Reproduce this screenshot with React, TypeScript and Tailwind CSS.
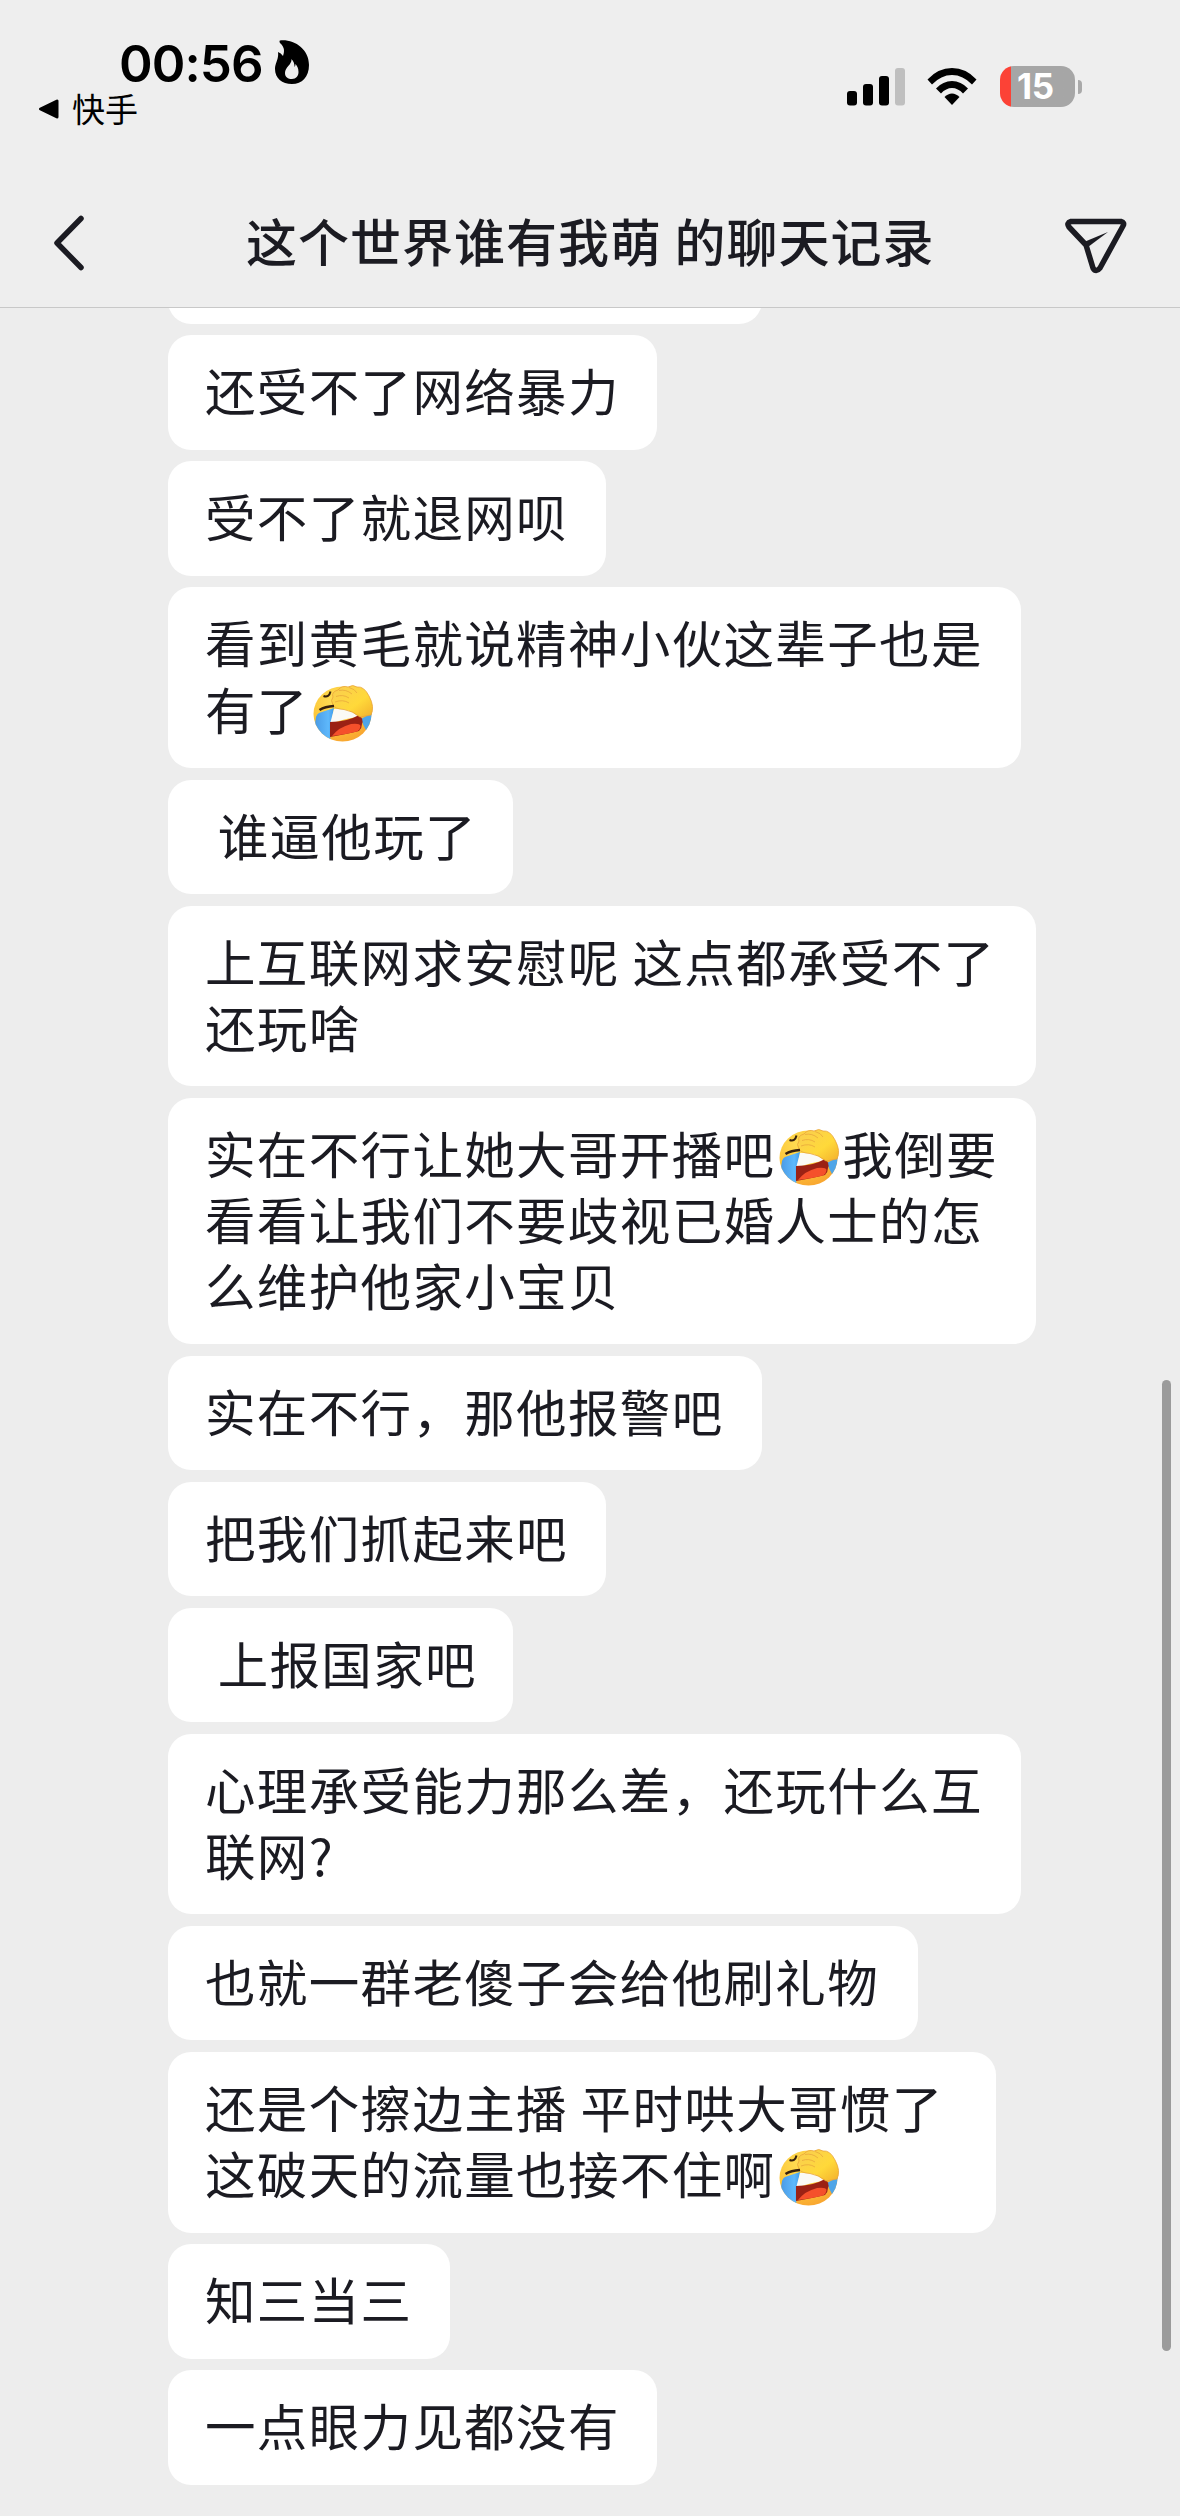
import React from "react";

interface Message {
  id: number;
  width: string;
  lines: string[];
}

// "[捂脸]" marks where the emoji goes inside a line
const EMOJI = "[捂脸]";

const messages: Message[] = [
  { id: 0, width: "w-[594px]", lines: [""] },
  { id: 1, width: "w-[489px]", lines: ["还受不了网络暴力"] },
  { id: 2, width: "w-[438px]", lines: ["受不了就退网呗"] },
  {
    id: 3,
    width: "w-[853px]",
    lines: ["看到黄毛就说精神小伙这辈子也是", "有了[捂脸]"],
  },
  { id: 4, width: "w-[345px]", lines: [" 谁逼他玩了"] },
  {
    id: 5,
    width: "w-[868px]",
    lines: ["上互联网求安慰呢 这点都承受不了", "还玩啥"],
  },
  {
    id: 6,
    width: "w-[868px]",
    lines: [
      "实在不行让她大哥开播吧[捂脸]我倒要",
      "看看让我们不要歧视已婚人士的怎",
      "么维护他家小宝贝",
    ],
  },
  { id: 7, width: "w-[594px]", lines: ["实在不行，那他报警吧"] },
  { id: 8, width: "w-[438px]", lines: ["把我们抓起来吧"] },
  { id: 9, width: "w-[345px]", lines: [" 上报国家吧"] },
  {
    id: 10,
    width: "w-[853px]",
    lines: ["心理承受能力那么差，还玩什么互", "联网?"],
  },
  { id: 11, width: "w-[750px]", lines: ["也就一群老傻子会给他刷礼物"] },
  {
    id: 12,
    width: "w-[828px]",
    lines: ["还是个擦边主播 平时哄大哥惯了", "这破天的流量也接不住啊[捂脸]"],
  },
  { id: 13, width: "w-[282px]", lines: ["知三当三"] },
  { id: 14, width: "w-[489px]", lines: ["一点眼力见都没有"] },
];

const FacepalmEmoji: React.FC = () => (
  <span className="inline-flex h-[60px] w-[67px] justify-center pl-px align-[-14px]">
    <svg viewBox="0 0 60 60" className="h-[60px] w-[60px] shrink-0">
      <defs>
        <radialGradient id="face" cx="0.35" cy="0.25" r="0.85">
          <stop offset="0" stopColor="#ffdf55" />
          <stop offset="0.55" stopColor="#fcc437" />
          <stop offset="1" stopColor="#f8a02f" />
        </radialGradient>
        <linearGradient id="hand" x1="0" y1="0" x2="1" y2="1">
          <stop offset="0" stopColor="#f9cd52" />
          <stop offset="0.6" stopColor="#ffd93a" />
          <stop offset="1" stopColor="#f3b02c" />
        </linearGradient>
        <linearGradient id="tear" x1="0" y1="0" x2="1" y2="0">
          <stop offset="0" stopColor="#4a9be6" />
          <stop offset="0.7" stopColor="#5eb8fb" />
          <stop offset="1" stopColor="#3f9bea" />
        </linearGradient>
        <clipPath id="round">
          <ellipse cx="29.5" cy="30" rx="29" ry="27.5" />
        </clipPath>
      </defs>
      <ellipse cx="29.5" cy="30" rx="29" ry="27.5" fill="url(#face)" />
      <g clipPath="url(#round)">
        <path d="M6 29 L21 24 L18 40 L17 60 L3 56 Q1 42 3 33 Q4 30 6 29Z" fill="url(#tear)" />
        <path d="M48 35 L61 28 L60 43 L54 48 Q50 41 48 35Z" fill="#4fa5e8" />
      </g>
      <path d="M21 25 L34 25 Q41 29 46 33 Q33 34 17 40 Z" fill="#fbfaf5" />
      <path d="M17 38 Q34 38 46 31 Q51 35 49 40 Q49 44 46 47 Q34 50 17 53 Z" fill="#9b2114" />
      <path d="M19 52 Q26 43 38 40 Q47 39 47.500 42 Q47 46 44 47.500 Q34 50 19 52Z" fill="#f5502b" />
      <path
        d="M20 13 Q18 8 25 6 Q29 1 35 3 Q40 0 44 3 Q51 2 56 12 Q62 23 58 31 L47 33 Q40 27 31 25.500 Q22 25 20 21 Q17 16 20 13Z"
        fill="url(#hand)"
        stroke="#eaa43a"
        strokeWidth="0.8"
      />
      <path
        d="M23 12.500 Q30 10 36 14 M22 18 Q30 15 36 19 M26 6.500 Q33 5 39 10 M36 3.500 Q42 5 44 9"
        fill="none"
        stroke="#e8a83c"
        strokeWidth="0.8"
      />
      <path d="M6.500 26 Q12 22.500 21 22" fill="none" stroke="#35200d" strokeWidth="2.600" />
      <path d="M10.500 12 Q16 14 17.500 7.500" fill="none" stroke="#35200d" strokeWidth="2" />
    </svg>
  </span>
);

const MessageBubble: React.FC<{ message: Message }> = ({ message }) => (
  <li
    className={`${message.width} shrink-0 rounded-[23px] bg-white pt-[21px] pb-[27px] pl-[37px] text-[50.5px] leading-[66.2px] tracking-[1.35px] whitespace-pre text-[#1b1b22]`}
  >
    {message.lines.map((line, i) => {
      const parts = line.split(EMOJI);
      return (
        <div key={i} className="h-[66.2px]">
          {parts.map((part, j) => (
            <React.Fragment key={j}>
              {j > 0 && <FacepalmEmoji />}
              {part}
            </React.Fragment>
          ))}
        </div>
      );
    })}
  </li>
);

const StatusBar: React.FC = () => (
  <div className="flex h-[176px] justify-between text-black">
    <div className="pt-[34px] pl-[38px]">
      <div className="flex h-[58px] items-center pl-[81px]">
        <span className="w-[156px] pt-[2px] font-[Inter] text-[51px] leading-[56px] font-semibold tracking-[-0.9px] whitespace-nowrap">
          00:56
        </span>
        <svg viewBox="0 0 34 44" className="-mt-[2px] h-[44px] w-[34px]">
          <path
            fillRule="evenodd"
            d="M5 0.5 C19 -1 34 9 34 25 C34 37 27 44 17 44 C7 44 0 38 0 29 C0 23 4 19 3 12 Q6 13 8 16 Q11 8 5 3 Q4 1 5 0.5Z M16.5 19 C17 25 10 27 10 33 C10 37 13 39 17 39 C21 39 23.500 36 23.500 32 C23.500 28 22 26 20.500 24 Q20.500 26 19.500 27 Q19.500 22 16.500 19Z"
            fill="currentColor"
          />
        </svg>
      </div>
      <div className="flex h-[34px] items-center gap-[12px]">
        <svg viewBox="0 0 22 22" className="h-[22px] w-[22px]">
          <path
            d="M2.500 11 L19 3 L19 19 Z"
            fill="currentColor"
            stroke="currentColor"
            strokeWidth="3"
            strokeLinejoin="round"
          />
        </svg>
        <span className="-mt-[3px] text-[33px] leading-[34px]">快手</span>
      </div>
    </div>

    <div className="mt-[66px] flex h-[41px] items-center pr-[98px]">
      <svg viewBox="0 0 58 38" className="h-[38px] w-[58px]">
        <rect x="0" y="23" width="10" height="14.500" rx="3" />
        <rect x="16" y="16" width="10" height="21.500" rx="3" />
        <rect x="32" y="8" width="10" height="29.500" rx="3" />
        <rect x="48" y="0" width="10" height="37.500" rx="3" fill="#bfbfbf" />
      </svg>
      <svg viewBox="0 0 50 37" className="ml-[22px] h-[37px] w-[50px]">
        <path d="M0.500 11.500 Q11 0 25 0 Q39 0 49.500 11.500 L45 16.500 Q36 7 25 7 Q14 7 5 16.500 Z" />
        <path d="M9 20.500 Q16 13 25 13 Q34 13 41 20.500 L36 25.500 Q31 20 25 20 Q19 20 14 25.500 Z" />
        <path d="M17.500 29 Q21 25.500 25 25.500 Q29 25.500 32.500 29 L25 37 Z" />
      </svg>
      <div className="ml-[23px] flex h-[41px] w-[75px] items-center justify-center overflow-hidden rounded-[14px] bg-linear-to-r from-[#fc4236] from-[11.500px] to-[#a6a6a6] to-[11.500px] pr-[4px]">
        <span className="font-[Inter] text-[35px] leading-[41px] font-bold tracking-[-0.3px] text-white">
          15
        </span>
      </div>
      <div className="ml-[3px] h-[14px] w-[4px] rounded-r-full bg-[#a9a9a9]" />
    </div>
  </div>
);

const NavBar: React.FC = () => (
  <div className="flex h-[132px] items-center border-b border-[#c8c8c8] pr-[53px] pl-[52px] text-[#1b1b22]">
    <svg viewBox="0 0 34 58" className="mt-[2px] h-[58px] w-[34px]">
      <path
        d="M29 4.500 L5 29 L29 53.500"
        fill="none"
        stroke="currentColor"
        strokeWidth="5.500"
        strokeLinecap="round"
        strokeLinejoin="round"
      />
    </svg>
    <h1 className="-mt-[3px] ml-[160px] text-[51px] leading-[66px] font-medium tracking-[1px] whitespace-pre">
      这个世界谁有我萌 的聊天记录
    </h1>
    <svg viewBox="0 0 62 58" className="mt-[9px] ml-auto h-[58px] w-[62px]">
      <path
        d="M6 4.500 L56 4.500 Q60 5.500 58 9 L35 51 Q31 56 28 51 L21 28 L4 10 Q1 6 6 4.500Z"
        fill="none"
        stroke="currentColor"
        strokeWidth="5.500"
        strokeLinejoin="round"
      />
      <path d="M19 25 L43 15 L23 30 Z" fill="currentColor" />
    </svg>
  </div>
);

export default function App() {
  return (
    <div className="relative h-[2516px] w-[1180px] overflow-hidden bg-[#ededed] font-['Noto_Sans_CJK_SC',sans-serif]">
      <header className="h-[308px] bg-[#eeeeee]">
        <StatusBar />
        <NavBar />
      </header>
      <ul className="flex h-[2208px] flex-col items-start justify-end gap-[11.8px] overflow-hidden pb-[31.5px] pl-[168px]">
        {messages.map((m) => (
          <MessageBubble key={m.id} message={m} />
        ))}
      </ul>
      {/* scroll indicator */}
      <div className="absolute top-[1380px] right-[9px] h-[971px] w-[9px] rounded-full bg-[#9b9b9b]" />
    </div>
  );
}
